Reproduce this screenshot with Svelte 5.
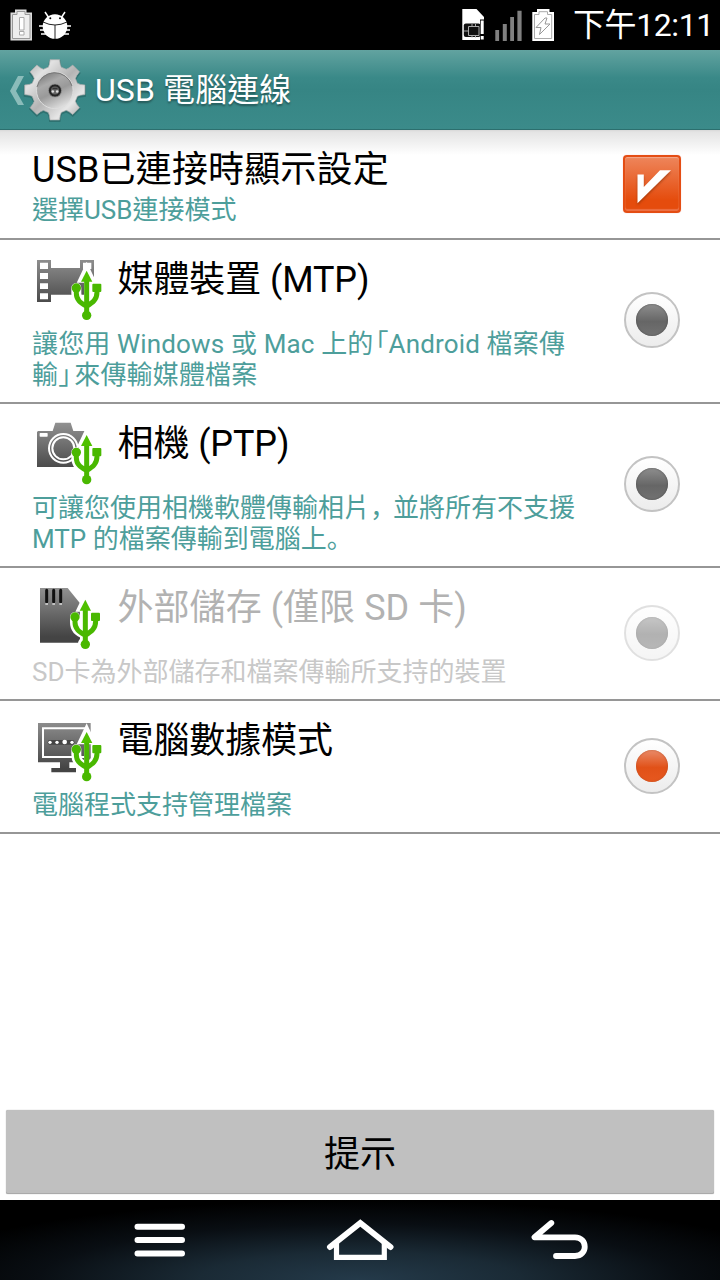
<script lang="ts">
  type Mode = {
    id: string;
    title: string;
    lines: string[];
    icon: string;
    viewBox: string;
    usb: string;
    disabled?: boolean;
  };

  const modes: Mode[] = [
    {
      id: 'mtp',
      title: '媒體裝置 (MTP)',
      lines: ['讓您用 Windows 或 Mac 上的「Android 檔案傳', '輸」來傳輸媒體檔案'],
      icon: 'film',
      viewBox: '36 6 216 216',
      usb: 'translate(0 0)'
    },
    {
      id: 'ptp',
      title: '相機 (PTP)',
      lines: ['可讓您使用相機軟體傳輸相片，並將所有不支援', 'MTP 的檔案傳輸到電腦上。'],
      icon: 'camera',
      viewBox: '36 3 216 216',
      usb: 'translate(0 -2)'
    },
    {
      id: 'sd',
      title: '外部儲存 (僅限 SD 卡)',
      lines: ['SD卡為外部儲存和檔案傳輸所支持的裝置'],
      icon: 'card',
      viewBox: '36 0 216 216',
      usb: 'translate(-4 -3)',
      disabled: true
    },
    {
      id: 'pc',
      title: '電腦數據模式',
      lines: ['電腦程式支持管理檔案'],
      icon: 'monitor',
      viewBox: '36 3 216 216',
      usb: 'translate(0 -2)'
    }
  ];

  let selected = $state('pc');
  let showOnConnect = $state(true);

  // brackets are set half width, comma and full stop sit at the left of their cell
  const split = (line: string) => line.split(/([「」，。])/).filter(Boolean);
  const kinds: Record<string, string> = { '「': 'half open', '」': 'half close', '，': 'stop comma', '。': 'stop' };

  function gear(cx: number, cy: number) {
    const points: string[] = [];
    for (let i = 0; i < 8; i++) {
      for (const [deg, r] of [[-16, 23.5], [-12, 26], [-9, 30.5], [9, 30.5], [12, 26], [16, 23.5]]) {
        const a = ((i * 45 + deg) * Math.PI) / 180;
        points.push(`${(cx + r * Math.sin(a)).toFixed(2)},${(cy - r * Math.cos(a)).toFixed(2)}`);
      }
    }
    return points.join(' ');
  }
</script>

{#snippet usb(transform: string)}
  <g {transform}>
    <g class="halo">
      <path d="M200 53 L218 91 H182Z M200 91V196" />
      <path d="M169 114V130C169 149 178 159 200 166C222 159 231 145 231 128V114" fill="none" />
      <circle cx="200" cy="196" r="8" />
    </g>
    <path d="M200 92V195M169 114V130C169 151 182 158 200 169C218 158 231 149 231 126V118" fill="none" stroke="#49b800" stroke-width="15" />
    <path d="M200 62L217 95H183Z" fill="#4fc000" />
    <circle cx="169" cy="114" r="14" fill="#49b800" />
    <rect x="217" y="101" width="27" height="25" rx="3" fill="#49b800" />
    <circle cx="200" cy="196" r="14" fill="#49b800" />
  </g>
{/snippet}

<div class="screen">
  <header class="status">
    <svg width="80" height="50" viewBox="0 0 80 50">
      <path d="M10.5 12.5H15V9.5H26.5V12.5H32V40.5H10.5Z" fill="#ddd" />
      <path d="M12.5 14.5H17V11.5H25V14.5H30V38.5H12.5Z" fill="#eee" stroke="#999" />
      <path d="M19.5 17.5H24V30H19.5ZM19.5 31.5H24V35H19.5Z" fill="#fff" stroke="#aaa" />
      <path d="M45 12l4 6M65 12l-4 6M39 26h6M71 26h-6M40 30h6M70 30h-6M41 34h6M69 34h-6" stroke="#fff" stroke-width="1.5" />
      <circle cx="55" cy="26.5" r="12.3" fill="#fff" />
      <path d="M43 22Q55 28 67 22M55 25V39" fill="none" stroke="#222" />
      <circle cx="50.3" cy="18.3" r="1" fill="#000" />
      <circle cx="60" cy="18.3" r="1" fill="#000" />
    </svg>
    <div class="tray">
      <svg width="100" height="50" viewBox="455 0 100 50">
        <path d="M462.3 9H476.5L484 17V19.5H480V40H462.3Z" fill="#fff" />
        <rect x="463.8" y="23.5" width="16.7" height="13.5" rx="2" fill="#111" />
        <path d="M468.5 26.5H479V35.5H468.5ZM464 31h4.5M472 24v2.5M475.5 24v2.5M472 35.5v2M475.5 35.5v2" fill="none" stroke="#aaa" />
        <path d="M482.2 20.5V34M482.2 36v3.5" stroke="#fff" stroke-width="3" />
        <path d="M495.3 30h3.8v11h-3.8zM502.8 24h4v17h-4zM510.2 17h3.8v24h-3.8zM517.4 10.7h4.2v30.3h-4.2z" fill="#808080" />
        <path d="M532.3 12H537V9H549.5V12H554V41H532.3Z" fill="#fff" />
        <path d="M534.5 14.5H539V11.7H547.5V14.5H551.7V38.5H534.5Z" fill="#fff" stroke="#aaa" />
        <path d="M545 18L536 27.5H541L539.5 34.5L550 24H545L547 18Z" fill="#fff" stroke="#999" />
      </svg>
      <span class="clock">下午12:11</span>
    </div>
  </header>

  <div class="bar">
    <svg width="90" height="79" viewBox="0 50 90 79">
      <defs>
        <linearGradient id="metal" x1="0" y1="0" x2="1" y2="1">
          <stop offset="0" stop-color="#a5a5a5" />
          <stop offset=".25" stop-color="#e2e2e2" />
          <stop offset=".5" stop-color="#b4b4b4" />
          <stop offset=".75" stop-color="#e6e6e6" />
          <stop offset="1" stop-color="#999" />
        </linearGradient>
        <linearGradient id="dish" x1=".2" y1="0" x2=".7" y2="1">
          <stop offset="0" stop-color="#777" />
          <stop offset=".3" stop-color="#aaa" />
          <stop offset=".55" stop-color="#999" />
          <stop offset="1" stop-color="#e4e4e4" />
        </linearGradient>
      </defs>
      <path d="M18 76H24L16 91L24 105H18L10 91Z" fill="#8bbcba" />
      <polygon points={gear(54.8, 91)} fill="#245b5a" opacity=".5" stroke="#245b5a" stroke-width="2" />
      <polygon points={gear(54.8, 89.8)} fill="url(#metal)" stroke="#b2b2b2" stroke-width=".7" />
      <circle cx="54.8" cy="90.3" r="18.3" fill="url(#dish)" stroke="#ddd" />
      <path d="M37 87A18 18 0 0 1 72 86" fill="none" stroke="#777" />
      <circle cx="55" cy="90.5" r="6.6" fill="#252525" stroke="#999" stroke-width=".8" />
      <circle cx="55" cy="90.5" r="4" fill="#666" />
      <circle cx="52.8" cy="91.5" r="1.3" fill="#ddd" />
      <circle cx="57.2" cy="91.5" r="1.3" fill="#ddd" />
      <path d="M52.5 88.5h5" stroke="#333" stroke-width="1.5" />
    </svg>
    <h1>USB 電腦連線</h1>
  </div>

  <main>
    <section class="row first">
      <div class="text">
        <h2>USB已連接時顯示設定</h2>
        <p>選擇USB連接模式</p>
      </div>
      <button class="check" aria-label="USB已連接時顯示設定" onclick={() => (showOnConnect = !showOnConnect)}>
        {#if showOnConnect}
          <svg width="58" height="58" viewBox="0 0 58 58"><path d="M14.5 19.5H20.8V32L37 15.3H48L14.5 48.3Z" fill="#fff" /></svg>
        {/if}
      </button>
    </section>

    {#each modes as mode (mode.id)}
      <section class="row" class:disabled={mode.disabled}>
        <div class="text">
          <div class="heading">
            <svg class="icon" width="72" height="72" viewBox={mode.viewBox}>
              <defs>
                <linearGradient id="g-{mode.id}" gradientUnits="userSpaceOnUse" x1="0" y1="25" x2="0" y2="170">
                  <stop offset="0" stop-color="#909090" />
                  <stop offset="1" stop-color="#444" />
                </linearGradient>
              </defs>
              <g fill="url(#g-{mode.id})">
                {#if mode.icon === 'film'}
                  <path d="M51 30H93V54H180V30H222V90H192V134H93V156H51Z" />
                  <path d="M60 38h24v19H60zM60 69h24v18H60zM60 100h24v17H60zM60 130h24v18H60zM189 38h25v19h-25z" fill="#fff" />
                {:else if mode.icon === 'camera'}
                  <path d="M54 48H98L106 23H152L160 48H195L178 90L170 156H51V51Z" />
                  <rect x="59" y="54" width="24" height="11" rx="2" fill="#fff" />
                  <circle cx="130" cy="100" r="43" fill="none" stroke="#fff" stroke-width="6" />
                  <circle cx="130" cy="100" r="33" fill="none" stroke="#fff" stroke-width="6" />
                {:else if mode.icon === 'card'}
                  <path d="M60 24H143L180 70V188H60Z" />
                  <path d="M80 31V65M101 31V65M122 31V65" stroke="#111" stroke-width="9" stroke-linecap="round" />
                  <path d="M76 72h8M97 72h8M118 72h8" stroke="#ddd" stroke-width="4" />
                {:else}
                  <path d="M54 33H212V151H148V168H168V181H94V168H120V151H54Z" />
                  <path d="M69 49H199V135H69Z" fill="none" stroke="#fff" stroke-width="6" />
                  <path d="M90 91H156" stroke="#444" stroke-width="14" stroke-linecap="round" />
                  <circle cx="90" cy="91" r="5" fill="#fff" />
                  <circle cx="111" cy="91" r="5" fill="#fff" />
                  <circle cx="134" cy="90" r="7" fill="#fff" />
                  <circle cx="156" cy="91" r="5" fill="#fff" />
                {/if}
              </g>
              {@render usb(mode.usb)}
            </svg>
            <h2>{mode.title}</h2>
          </div>
          {#each mode.lines as line}
            <p class={mode.id}>{#each split(line) as part}<span class={kinds[part]}>{part}</span>{/each}</p>
          {/each}
        </div>
        <button
          class="radio"
          class:on={selected === mode.id}
          disabled={mode.disabled}
          aria-label={mode.title}
          onclick={() => (selected = mode.id)}
        ><span class="dot"></span></button>
      </section>
    {/each}
  </main>

  <footer><button class="hint">提示</button></footer>

  <nav>
    <svg width="720" height="80" viewBox="0 0 720 80" fill="none" stroke="#fff" stroke-width="6" stroke-linecap="round">
      <path d="M137.5 26.7H182M137.5 40H182M137.5 53.4H182" />
      <path d="M330 47L360.3 23L390.5 47" stroke-linejoin="miter" />
      <path d="M336.5 43V57.4H384.3V43" stroke-width="5.2" stroke-linecap="butt" />
      <path d="M551.3 23L534.5 37.3H575C588 37.3 588 56 575 56H556" stroke-linejoin="round" stroke-width="5.8" />
    </svg>
  </nav>
</div>

<style>
  :global(body) {
    margin: 0;
    background: #fff;
  }

  .screen {
    display: flex;
    flex-direction: column;
    width: 720px;
    height: 1280px;
    overflow: hidden;
    background: #fff;
    font-family: Roboto, 'Noto Sans CJK TC', sans-serif;
  }

  h1,
  h2,
  p {
    margin: 0;
    font-weight: 400;
    white-space: nowrap;
  }

  svg {
    display: block;
    flex: none;
  }

  button {
    flex: none;
    padding: 0;
    font: inherit;
  }

  .status {
    display: flex;
    justify-content: space-between;
    height: 50px;
    flex: none;
    background: #000;
    color: #fff;
  }

  .tray {
    display: flex;
  }

  .clock {
    width: 147px;
    padding-left: 18px;
    font-size: 32px;
    line-height: 50px;
    letter-spacing: -0.4px;
    white-space: nowrap;
  }

  .bar {
    display: flex;
    align-items: center;
    gap: 5px;
    box-sizing: border-box;
    height: 80px;
    flex: none;
    border-bottom: 1px solid #2c6f6e;
    background: linear-gradient(#62a3a0, #3a8988 35%, #368584 50%, #3b8b8a);
    color: #fff;
  }

  h1 {
    font-size: 32px;
    line-height: 80px;
    letter-spacing: 0.1px;
    text-shadow: 0 2px 2px rgba(0, 0, 0, 0.35);
  }

  main {
    flex: 1;
    background: linear-gradient(#d8d8d8, #e4e4e4 2px, #fff 25px);
  }

  .row {
    display: flex;
    justify-content: space-between;
    box-sizing: border-box;
    height: 164px;
    padding: 12px 40px 0 32px;
    border-bottom: 2px solid #969696;
  }

  .row.first {
    height: 110px;
    padding: 18px 39px 0 32px;
  }

  .row:nth-child(n + 4) {
    height: 133px;
  }

  .heading {
    display: flex;
    height: 77px;
    gap: 13.5px;
  }

  h2 {
    font-size: 36px;
    line-height: 44px;
    color: #000;
  }

  .first h2 {
    letter-spacing: 0.15px;
  }

  .heading h2 {
    line-height: 56px;
    letter-spacing: -0.1px;
  }

  .disabled .heading h2 {
    color: #b2b2b2;
    letter-spacing: 0.05px;
  }

  p {
    height: 31px;
    font-size: 26px;
    line-height: 31px;
    color: #4d9e9b;
  }

  .first p {
    line-height: 37px;
  }

  .mtp {
    letter-spacing: 0.15px;
  }

  .half {
    font-feature-settings: 'halt';
  }

  .open {
    margin-left: 2px;
  }

  .close {
    margin-right: 3px;
  }

  .stop {
    font-family: Roboto, 'Noto Sans CJK JP', sans-serif;
  }

  .comma {
    letter-spacing: -3px;
  }

  .disabled p {
    color: #c8c8c8;
  }

  .halo {
    fill: #fff;
    stroke: #fff;
    stroke-width: 30;
    stroke-linecap: round;
  }

  .halo path:first-child {
    stroke-width: 15;
  }

  .check {
    width: 58px;
    height: 58px;
    margin-top: 7px;
    border: 2px solid #e44d13;
    border-radius: 4px;
    background: linear-gradient(#ee855b, #e54c0d 80%);
    box-shadow: inset 0 1px 1px #f3a88b, inset 0 -2px 1px #ec7044, 0 0 1px #e99;
  }

  .check svg {
    margin: -2px;
    filter: drop-shadow(0 2px 1px rgba(120, 40, 0, 0.5));
  }

  .radio {
    display: grid;
    place-items: center;
    align-self: center;
    width: 56px;
    height: 56px;
    margin-top: -14px;
    border: 2px solid #c3c3c3;
    border-radius: 50%;
    background: linear-gradient(#fff, #ececec);
  }

  .dot {
    width: 32px;
    height: 32px;
    border-radius: 50%;
    background: linear-gradient(#8e8e8e, #666 55%, #727272);
    box-shadow: inset 0 0 2px #444;
  }

  .on .dot {
    background: linear-gradient(#e98b69, #e15118 55%, #e6581f);
    box-shadow: inset 0 0 2px #b64b20;
  }

  .disabled .radio {
    opacity: 0.5;
  }

  footer {
    height: 90px;
    flex: none;
    padding: 0 6px;
  }

  .hint {
    box-sizing: border-box;
    width: 708px;
    height: 84px;
    padding-top: 7px;
    border: 0;
    border-radius: 2px;
    background: #c0c0c0;
    box-shadow: 0 0 1px #999, inset 0 -1px #aaa;
    font-size: 36px;
    line-height: 77px;
    color: #000;
  }

  nav {
    height: 80px;
    flex: none;
    background: radial-gradient(ellipse 460px 80px at 50% 100%, #243a4a, #1a2a35 35%, #090e13 70%, #000);
  }
</style>
